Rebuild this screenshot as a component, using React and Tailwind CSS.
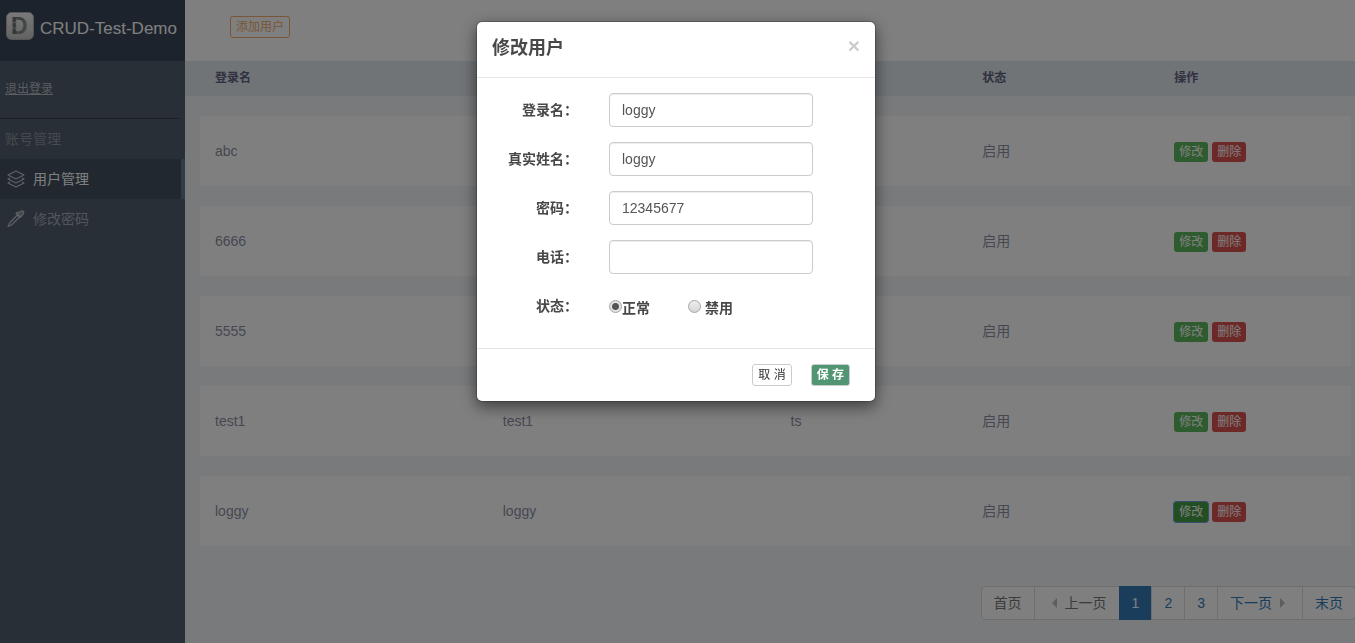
import React, { useState } from 'react';

const users = [
  { id: 1, login: 'abc', name: '', phone: '', status: '启用' },
  { id: 2, login: '6666', name: '', phone: '', status: '启用' },
  { id: 3, login: '5555', name: '', phone: '', status: '启用' },
  { id: 4, login: 'test1', name: 'test1', phone: 'ts', status: '启用' },
  { id: 5, login: 'loggy', name: 'loggy', phone: '', status: '启用' },
];

const fields = [
  { key: 'login', label: '登录名：' },
  { key: 'name', label: '真实姓名：' },
  { key: 'password', label: '密码：' },
  { key: 'phone', label: '电话：' },
];

const Logo = () => (
  <svg width="28" height="28" viewBox="0 0 28 28" aria-hidden="true">
    <defs>
      <linearGradient id="logo-bg" x1="0" y1="0" x2="0" y2="1">
        <stop offset="0" stopColor="#f4f4f4" />
        <stop offset="1" stopColor="#c4c4c4" />
      </linearGradient>
      <linearGradient id="logo-letter" x1="0" y1="0" x2="1" y2="0">
        <stop offset="0" stopColor="#62686b" />
        <stop offset="1" stopColor="#8f9692" />
      </linearGradient>
    </defs>
    <rect x="0.5" y="0.5" width="27" height="27" rx="5" fill="url(#logo-bg)" stroke="#a8adb3" />
    <text x="5" y="22" fontSize="23" fontWeight="bold" fontFamily="Liberation Sans, sans-serif" fill="url(#logo-letter)">D</text>
    <path d="M6 11l5-1M6 15.500l4 1M11 8v-2M12 22v-3" stroke="#d0d0d0" strokeWidth="0.700" />
  </svg>
);

const LayersIcon = () => (
  <svg width="18" height="18" viewBox="0 0 18 18" fill="none" stroke="currentColor" strokeWidth="1.100" strokeLinejoin="round" aria-hidden="true">
    <path d="M9 1l8 4-8 4-8-4z" />
    <path d="M3 8L1 9l8 4 8-4-2-1" />
    <path d="M3 12l-2 1 8 4 8-4-2-1" />
  </svg>
);

const PenIcon = () => (
  <svg width="18" height="18" viewBox="0 0 18 18" fill="none" stroke="currentColor" strokeWidth="1.100" strokeLinejoin="round" aria-hidden="true">
    <path d="M1 16.500c1.200-2.500 1-3 2.500-4.500L11 4.500l2 2L5.500 14C4.300 15.200 3.500 15 1 16.500z" />
    <path d="M9 3.500c1-1.500 2.500-1 3.200-1.200C13.500 1 15.500.500 16.300 1.300s.2 2.700-1 4L13 7.500 10.500 5z" fill="currentColor" fillOpacity="0.500" />
  </svg>
);

const Sidebar = () => (
  <aside className="w-[185px] shrink-0 bg-[#505e6e]">
    <div className="flex h-[61px] items-center gap-1.5 bg-[#3a4759] pb-[9px] pl-1.5 pr-1">
      <Logo />
      <span className="whitespace-nowrap pt-[5px] text-[17px] text-white">CRUD-Test-Demo</span>
    </div>
    <div className="mr-[5px] flex h-[58px] items-center border-b border-[#38434f] pb-0.5 pl-[5px]">
      <a href="#logout" className="text-[12px] text-[#b4bcc3] underline">退出登录</a>
    </div>
    <h2 className="flex h-10 items-center pl-[5px] text-[14px] text-[#8b949b]">账号管理</h2>
    <nav>
      <a href="#users" className="flex h-10 items-center gap-2 border-r-4 border-[#607890] bg-[#425060] pl-[7px] text-[14px] text-white">
        <span className="text-[#c0c6cb]"><LayersIcon /></span>
        用户管理
      </a>
      <a href="#password" className="flex h-10 items-center gap-2 pl-[7px] text-[14px] text-[#a4acb2]">
        <span className="text-[#c0c6cb]"><PenIcon /></span>
        修改密码
      </a>
    </nav>
  </aside>
);

const UserTable = ({ activeId }) => (
  <table className="block">
    <thead className="block bg-[#e0e8ee]">
      <tr className="ml-[15px] mr-1 grid h-[35px] grid-cols-12 items-center pb-0.5 text-left text-[12px] text-[#5e6380]">
        <th className="col-span-3 px-[15px]">登录名</th>
        <th className="col-span-3 px-[15px]">真实姓名</th>
        <th className="col-span-2 px-[15px]">电话</th>
        <th className="col-span-2 px-[15px]">状态</th>
        <th className="col-span-2 px-[15px]">操作</th>
      </tr>
    </thead>
    <tbody className="ml-[15px] mr-1 mt-5 flex flex-col gap-5">
      {users.map((user) => (
        <tr key={user.id} className="grid h-[70px] grid-cols-12 items-center bg-white text-[14px] text-[#8c8fa5]">
          <td className="col-span-3 px-[15px]">{user.login}</td>
          <td className="col-span-3 px-[15px]">{user.name}</td>
          <td className="col-span-2 px-[15px]">{user.phone}</td>
          <td className="col-span-2 px-[15px]">{user.status}</td>
          <td className="col-span-2 flex gap-1 px-[15px] pt-0.5">
            <button
              type="button"
              className={`h-5 rounded-[3px] px-[5px] text-[12px] leading-5 text-white ${
                user.id === activeId ? 'bg-[#449d44] ring-1 ring-[#6a9fe0]' : 'bg-[#5cb85c]'
              }`}
            >
              修改
            </button>
            <button type="button" className="h-5 rounded-[3px] bg-[#d9534f] px-[5px] text-[12px] leading-5 text-white">
              删除
            </button>
          </td>
        </tr>
      ))}
    </tbody>
  </table>
);

const pageLink = 'flex h-[34px] items-center border border-[#ddd] bg-white px-3 -ml-px';

const Pagination = () => (
  <nav className="-mr-px mt-10 flex justify-end text-[14px] text-[#337ab7]">
    <a href="#first" className={`${pageLink} rounded-l text-[#777]`}>首页</a>
    <a href="#prev" className={`${pageLink} gap-2 pl-[17px] text-[#777]`}>
      <span className="border-y-[5px] border-r-[5px] border-y-transparent border-r-[#bbb]" />
      上一页
    </a>
    <a href="#1" className="-ml-px flex h-[34px] items-center border border-[#337ab7] bg-[#337ab7] px-3 text-white">1</a>
    <a href="#2" className={pageLink}>2</a>
    <a href="#3" className={pageLink}>3</a>
    <a href="#next" className={`${pageLink} gap-2 pr-[17px]`}>
      下一页
      <span className="border-y-[5px] border-l-[5px] border-y-transparent border-l-[#bbb]" />
    </a>
    <a href="#last" className={`${pageLink} rounded-r`}>末页</a>
  </nav>
);

const radioClass =
  'size-[13px] shrink-0 appearance-none rounded-full border border-[#a5a5a5] bg-linear-to-b from-[#eee] to-[#d6d6d6] checked:bg-[radial-gradient(circle,#555_0_3px,#e2e2e2_4px)]';

const EditUserModal = () => {
  const [form, setForm] = useState({ login: 'loggy', name: 'loggy', password: '12345677', phone: '', status: 'normal' });

  const update = (key, value) => setForm({ ...form, [key]: value });

  return (
    <div className="fixed inset-0 flex items-start justify-center bg-black/50 pr-[3px] pt-[21px]">
      <form
        role="dialog"
        aria-labelledby="modal-title"
        className="w-[400px] rounded-md border border-black/20 bg-white bg-clip-padding text-[14px] text-[#484848] shadow-[0_5px_15px_rgba(0,0,0,0.5)]"
      >
        <div className="flex h-14 items-start justify-between border-b border-[#e5e5e5] px-[15px] pt-[13px]">
          <h4 id="modal-title" className="text-[18px] leading-[26px] font-bold">修改用户</h4>
          <button type="button" aria-label="关闭" className="text-[21px] leading-[21px] font-bold text-[#ccc]">×</button>
        </div>
        <div className="flex flex-col gap-[15px] px-[15px] pb-[25px] pt-[15px]">
          {fields.map((field) => (
            <div key={field.key} className="flex items-center">
              <label htmlFor={field.key} className="w-[86px] text-right font-bold">{field.label}</label>
              <input
                id={field.key}
                type="text"
                value={form[field.key]}
                onChange={(e) => update(field.key, e.target.value)}
                className="ml-[31px] h-[34px] w-[204px] rounded border border-[#ccc] px-3 text-[#555] inset-shadow-[0_1px_1px_rgba(0,0,0,0.075)]"
              />
            </div>
          ))}
          <div className="flex h-[34px] items-center font-bold" role="radiogroup" aria-labelledby="status-label">
            <span id="status-label" className="w-[86px] text-right">状态：</span>
            <label className="ml-[31px] flex items-center">
              <input
                type="radio"
                name="status"
                checked={form.status === 'normal'}
                onChange={() => update('status', 'normal')}
                className={radioClass}
              />
              <span className="pt-1">正常</span>
            </label>
            <label className="ml-[38px] flex items-center gap-1">
              <input
                type="radio"
                name="status"
                checked={form.status === 'disabled'}
                onChange={() => update('status', 'disabled')}
                className={radioClass}
              />
              <span className="pt-1">禁用</span>
            </label>
          </div>
        </div>
        <div className="flex justify-end gap-[19px] border-t border-[#e5e5e5] py-[15px] pl-[15px] pr-[25px]">
          <button type="button" className="h-[22px] rounded-[3px] border border-[#ccc] bg-white px-[5px] text-[12px] leading-5 text-[#333]">
            取 消
          </button>
          <button type="button" className="h-[22px] rounded-[3px] border border-[#ccc] bg-[#529572] px-[5px] text-[12px] leading-5 font-bold text-white">
            保 存
          </button>
        </div>
      </form>
    </div>
  );
};

const App = () => {
  return (
    <div className="flex min-h-screen overflow-x-hidden bg-[#f2f4f8] font-['Liberation_Sans','Noto_Sans_CJK_SC',sans-serif]">
      <Sidebar />
      <main className="min-w-0 flex-1">
        <div className="flex h-[61px] items-start bg-white pl-[45px] pt-4">
          <button type="button" className="h-[22px] rounded-[3px] border border-[#f0ad6e] px-[5px] text-[12px] leading-5 text-[#f0ad6e]">
            添加用户
          </button>
        </div>
        <UserTable activeId={5} />
        <Pagination />
      </main>
      <EditUserModal />
    </div>
  );
};

export default App;
